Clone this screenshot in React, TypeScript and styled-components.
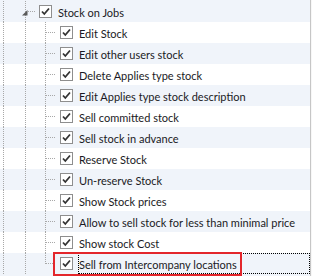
import React from "react";
import styled, { createGlobalStyle, css } from "styled-components";

const Global = createGlobalStyle`
  html, body { margin: 0; padding: 0; background: #f7f7f7; }
  body { width: 312px; height: 276px; overflow: hidden; }
`;

const Tree = styled.div`
  position: relative;
  width: 310px;
  height: 276px;
  border-right: 1px solid #c6c6c6;
  background: #f0f4fa;
  padding-top: 1px;
  box-sizing: content-box;
  font-family: Lato, "Open Sans", sans-serif;
  font-size: 11px;
  color: #1a1a24;
`;

const Row = styled.div<{ $band: boolean }>`
  display: flex;
  align-items: center;
  height: 21px;
  background: ${(p) => (p.$band ? "#f0f4fa" : "#ffffff")};
`;

type Span = "full" | "top" | "bottom" | "none";

const Guide = styled.div<{ $w: number; $v: Span; $h?: [number, number] }>`
  position: relative;
  flex: none;
  align-self: stretch;
  width: ${(p) => p.$w}px;
  ${(p) =>
    p.$v !== "none" &&
    css`
      &::before {
        content: "";
        position: absolute;
        left: 3px;
        top: ${p.$v === "bottom" ? "18px" : "0"};
        bottom: ${p.$v === "top" ? "10px" : "0"};
        border-left: 1px dotted #a8a8a8;
      }
    `}
  ${(p) =>
    p.$h &&
    css`
      &::after {
        content: "";
        position: absolute;
        left: ${p.$h[0]}px;
        width: ${p.$h[1]}px;
        top: 10px;
        border-top: 1px dotted #a8a8a8;
      }
    `}
`;

const Expander = styled.svg`
  position: absolute;
  left: 0;
  top: 9px;
`;

const Box = styled.span<{ $focused?: boolean }>`
  flex: none;
  width: 13px;
  height: 13px;
  box-sizing: border-box;
  border: 1px solid #8e8e8e;
  background: #fff;
  margin-right: ${(p) => (p.$focused ? "5px" : "6px")};
  display: flex;
  align-items: center;
  justify-content: center;
`;

const Label = styled.span<{ $focused?: boolean }>`
  white-space: nowrap;
  line-height: 19px;
  padding-top: 2px;
  ${(p) =>
    p.$focused &&
    css`
      flex: 1;
      align-self: stretch;
      border: 1px dotted #000;
      padding-top: 1px;
    `}
`;

const Marker = styled.div`
  position: absolute;
  left: 53px;
  top: 252px;
  width: 189px;
  height: 24px;
  box-sizing: border-box;
  border: 2px solid #e3262b;
  pointer-events: none;
`;

const Check = ({ focused }: { focused?: boolean }) => (
  <Box $focused={focused}>
    <svg width="11" height="11" viewBox="0 0 11 11">
      <path d="M2 5.5 L4.3 8 L9 2.5" fill="none" stroke="#333" strokeWidth="1.8" />
    </svg>
  </Box>
);

const children = [
  "Edit Stock",
  "Edit other users stock",
  "Delete Applies type stock",
  "Edit Applies type stock description",
  "Sell committed stock",
  "Sell stock in advance",
  "Reserve Stock",
  "Un-reserve Stock",
  "Show Stock prices",
  "Allow to sell stock for less than minimal price",
  "Show stock Cost",
  "Sell from Intercompany locations",
];

export default function App() {
  return (
    <>
      <Global />
      <Tree>
        <Row $band>
          <Guide $w={22} $v="full" />
          <Guide $w={17} $v="full" $h={[6, 7]}>
            <Expander width="6" height="6" viewBox="0 0 6 6">
              <path d="M5.5 0 L5.5 5.5 L0 5.5 Z" fill="#595959" />
            </Expander>
          </Guide>
          <Check />
          <Label>Stock on Jobs</Label>
        </Row>
        {children.map((t, i) => {
          const last = i === children.length - 1;
          return (
            <Row key={t} $band={i % 2 === 1}>
              <Guide $w={22} $v="full" />
              <Guide $w={20} $v="full" />
              <Guide $w={18} $v={last ? "top" : "full"} $h={[4, 9]} />
              <Check focused={last} />
              <Label $focused={last}>{t}</Label>
            </Row>
          );
        })}
        <Marker />
      </Tree>
    </>
  );
}
